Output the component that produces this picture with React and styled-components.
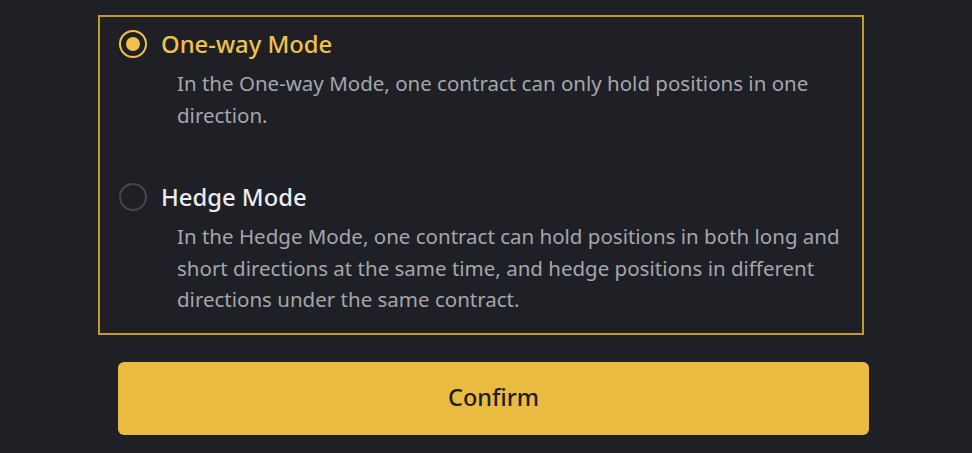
import React, { useState } from 'react'
import styled, { createGlobalStyle } from 'styled-components'

const GlobalStyle = createGlobalStyle`
  html, body {
    margin: 0;
    padding: 0;
    background: #1f2025;
  }
  body {
    font-family: 'Noto Sans', 'Open Sans', sans-serif;
  }
`

const Page = styled.div`
  width: 972px;
  height: 453px;
  padding-top: 15px;
  box-sizing: border-box;
  background: #1f2025;
`

/* Options */

const OptionBox = styled.div`
  width: 766px;
  height: 320px;
  margin-left: 98px;
  box-sizing: border-box;
  border: 2px solid #c29a2c;
  padding: 11px 0 0 19px;
  display: flex;
  flex-direction: column;
  gap: 50px;
`

const Option = styled.div`
  display: flex;
  flex-direction: column;
  cursor: pointer;
`

const Header = styled.div`
  display: flex;
  align-items: center;
  gap: 14px;
  height: 32px;
`

const Radio = styled.span`
  width: 28px;
  height: 28px;
  box-sizing: border-box;
  border-radius: 50%;
  border: 2px solid ${p => (p.checked ? '#f0c24b' : '#45474d')};
  display: flex;
  align-items: center;
  justify-content: center;

  &::after {
    content: '';
    width: 14px;
    height: 14px;
    border-radius: 50%;
    background: ${p => (p.checked ? '#f0c24b' : 'transparent')};
  }
`

const Title = styled.span`
  color: ${p => (p.checked ? '#f0c24b' : '#eaecef')};
  font-size: 23.8px;
  font-weight: 500;
`

const Description = styled.p`
  margin: 8px 0 0 58px;
  width: 684px;
  color: #a4a6ab;
  font-size: 20.5px;
  line-height: 31.5px;
`

/* Confirm */

const ConfirmButton = styled.button`
  display: flex;
  align-items: center;
  justify-content: center;
  width: 751px;
  height: 73px;
  margin: 27px 0 0 118px;
  border: 0;
  border-radius: 6px;
  background: #e9bb40;
  color: #1f2025;
  font-family: 'Noto Sans', 'Open Sans', sans-serif;
  font-size: 23.5px;
  font-weight: 500;
  padding: 0 0 3px;
  cursor: pointer;
`

const modes = [
  {
    id: 'one-way',
    name: 'One-way Mode',
    text: 'In the One-way Mode, one contract can only hold positions in one direction.',
  },
  {
    id: 'hedge',
    name: 'Hedge Mode',
    text:
      'In the Hedge Mode, one contract can hold positions in both long and short directions at the same time, and hedge positions in different directions under the same contract.',
  },
]

export default () => {
  const [mode, setMode] = useState('one-way')

  return (
    <Page>
      <GlobalStyle />
      <OptionBox>
        {modes.map(m => (
          <Option key={m.id} onClick={() => setMode(m.id)}>
            <Header>
              <Radio checked={mode === m.id} />
              <Title checked={mode === m.id}>{m.name}</Title>
            </Header>
            <Description>{m.text}</Description>
          </Option>
        ))}
      </OptionBox>
      <ConfirmButton>Confirm</ConfirmButton>
    </Page>
  )
}
